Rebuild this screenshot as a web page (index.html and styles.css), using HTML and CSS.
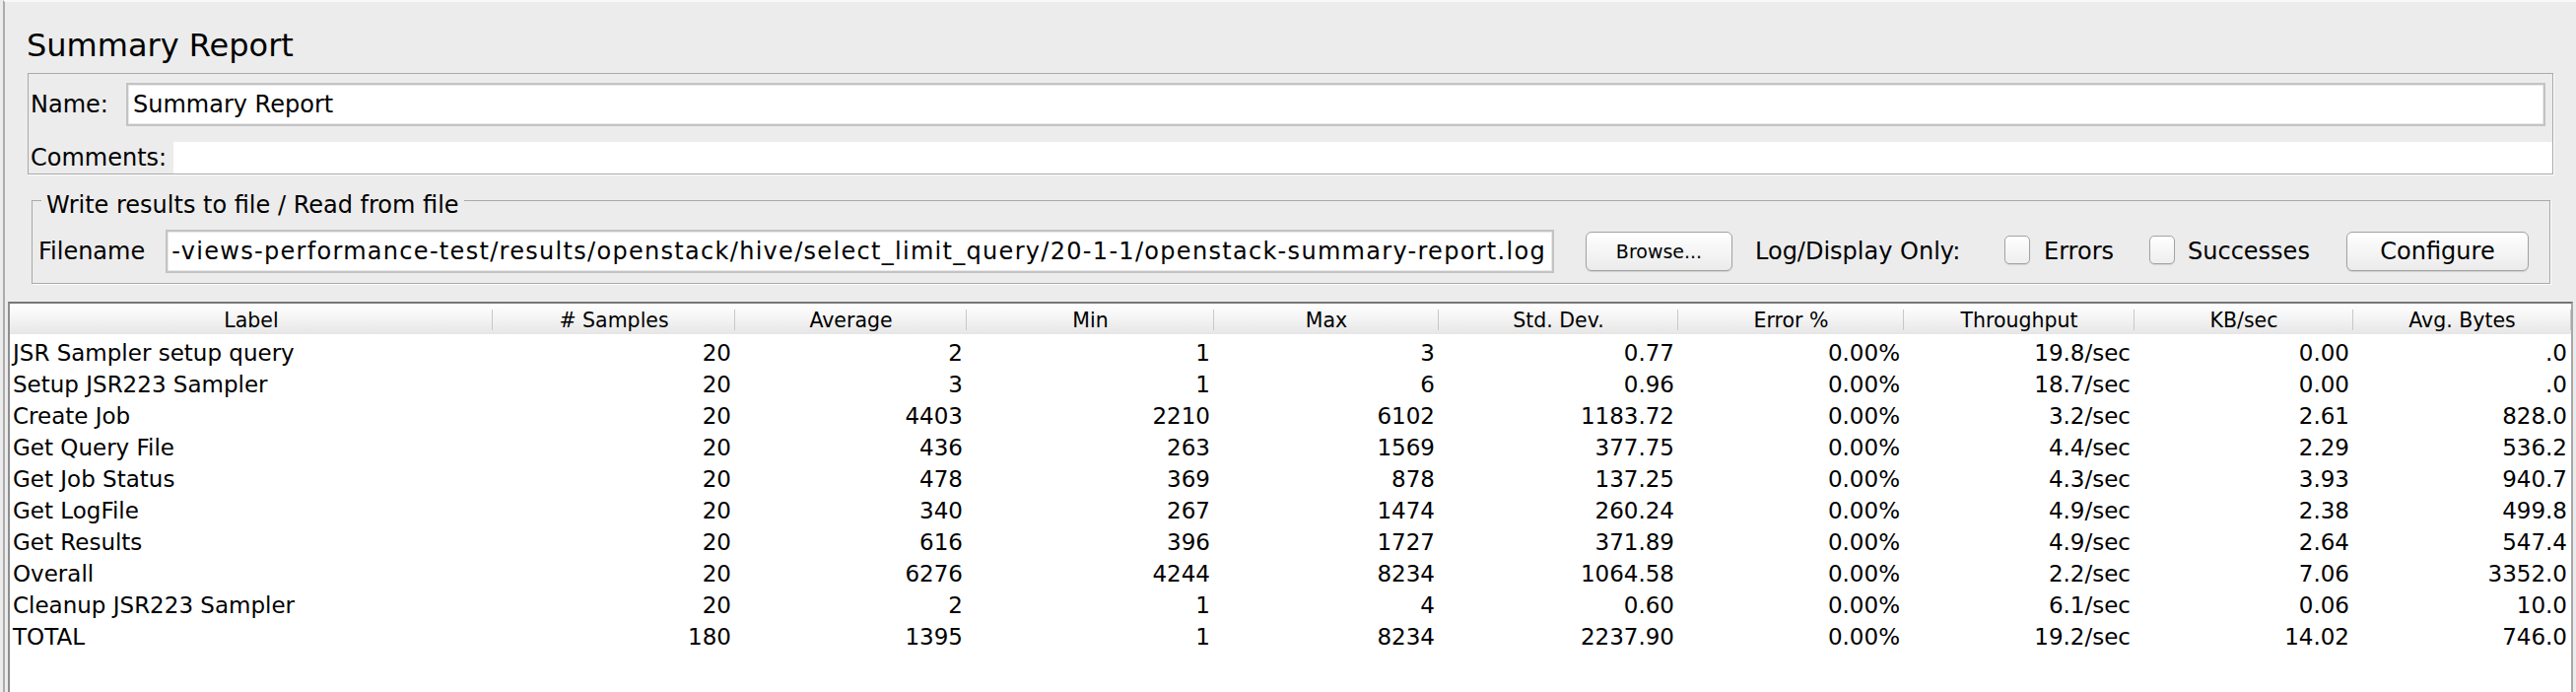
FILE: index.html
```html
<!DOCTYPE html>
<html lang="en">
<head>
<meta charset="utf-8">
<title>Summary Report</title>
<link rel="stylesheet" href="styles.css">
</head>
<body>
<div class="window">
  <h1 class="title">Summary Report</h1>

  <div class="name-panel">
    <div class="name-row">
      <span class="lbl name-lbl">Name:</span>
      <div class="textfield name-field">Summary Report</div>
    </div>
    <div class="comments-row">
      <span class="lbl comments-lbl">Comments:</span>
      <div class="comments-area"></div>
    </div>
  </div>

  <fieldset class="file-group">
    <legend class="group-title">Write results to file / Read from file</legend>
    <div class="file-row">
      <span class="lbl filename-lbl">Filename</span>
      <div class="textfield file-field"><span class="path">-views-performance-test/results/openstack/hive/select_limit_query/20-1-1/openstack-summary-report.log</span></div>
      <button class="btn btn-browse" type="button">Browse...</button>
      <span class="lbl log-lbl">Log/Display Only:</span>
      <span class="check"></span>
      <span class="lbl errors-lbl">Errors</span>
      <span class="check"></span>
      <span class="lbl succ-lbl">Successes</span>
      <button class="btn btn-configure" type="button">Configure</button>
    </div>
  </fieldset>

  <div class="table-frame">
    <table class="report">
      <colgroup>
        <col class="c-label"><col class="c-samples"><col class="c-avg"><col class="c-min"><col class="c-max">
        <col class="c-std"><col class="c-err"><col class="c-thr"><col class="c-kb"><col class="c-bytes">
      </colgroup>
      <thead>
        <tr class="head">
          <th>Label</th><th># Samples</th><th>Average</th><th>Min</th><th>Max</th>
          <th>Std. Dev.</th><th>Error %</th><th>Throughput</th><th>KB/sec</th><th>Avg. Bytes</th>
        </tr>
      </thead>
      <tbody>
        <tr><td class="label">JSR Sampler setup query</td><td>20</td><td>2</td><td>1</td><td>3</td><td>0.77</td><td>0.00%</td><td>19.8/sec</td><td>0.00</td><td>.0</td></tr>
        <tr><td class="label">Setup JSR223 Sampler</td><td>20</td><td>3</td><td>1</td><td>6</td><td>0.96</td><td>0.00%</td><td>18.7/sec</td><td>0.00</td><td>.0</td></tr>
        <tr><td class="label">Create Job</td><td>20</td><td>4403</td><td>2210</td><td>6102</td><td>1183.72</td><td>0.00%</td><td>3.2/sec</td><td>2.61</td><td>828.0</td></tr>
        <tr><td class="label">Get Query File</td><td>20</td><td>436</td><td>263</td><td>1569</td><td>377.75</td><td>0.00%</td><td>4.4/sec</td><td>2.29</td><td>536.2</td></tr>
        <tr><td class="label">Get Job Status</td><td>20</td><td>478</td><td>369</td><td>878</td><td>137.25</td><td>0.00%</td><td>4.3/sec</td><td>3.93</td><td>940.7</td></tr>
        <tr><td class="label">Get LogFile</td><td>20</td><td>340</td><td>267</td><td>1474</td><td>260.24</td><td>0.00%</td><td>4.9/sec</td><td>2.38</td><td>499.8</td></tr>
        <tr><td class="label">Get Results</td><td>20</td><td>616</td><td>396</td><td>1727</td><td>371.89</td><td>0.00%</td><td>4.9/sec</td><td>2.64</td><td>547.4</td></tr>
        <tr><td class="label">Overall</td><td>20</td><td>6276</td><td>4244</td><td>8234</td><td>1064.58</td><td>0.00%</td><td>2.2/sec</td><td>7.06</td><td>3352.0</td></tr>
        <tr><td class="label">Cleanup JSR223 Sampler</td><td>20</td><td>2</td><td>1</td><td>4</td><td>0.60</td><td>0.00%</td><td>6.1/sec</td><td>0.06</td><td>10.0</td></tr>
        <tr><td class="label">TOTAL</td><td>180</td><td>1395</td><td>1</td><td>8234</td><td>2237.90</td><td>0.00%</td><td>19.2/sec</td><td>14.02</td><td>746.0</td></tr>
      </tbody>
    </table>
  </div>
</div>
</body>
</html>
```

FILE: styles.css
```css
* {
  box-sizing: border-box;
}

html,
body {
  margin: 0;
  padding: 0;
}

body {
  width: 2614px;
  height: 702px;
  overflow: hidden;
  background: #ececec;
  color: #000;
  font-family: "DejaVu Sans", "Liberation Sans", sans-serif;
}

.window {
  height: 702px;
  margin-left: 3px;
  border-left: 2px solid #acacac;
  border-top: 2px solid #f8f8f8;
  display: flex;
  flex-direction: column;
}

.title {
  margin: 24px 0 0 22px;
  font-size: 32px;
  font-weight: normal;
  line-height: 40px;
}

.lbl {
  font-size: 24px;
  line-height: 28px;
  white-space: nowrap;
  flex: none;
}

/* Name / comments panel */
.name-panel {
  margin: 8px 23px 0 23px;
  padding: 9px 0 0 2px;
  border: 1px solid #a9a9a9;
  box-shadow: 1px 1px 0 #ffffff;
}

.name-row {
  display: flex;
  align-items: center;
  height: 44px;
}

.name-lbl {
  width: 97px;
}

.textfield {
  height: 44px;
  background: #fff;
  border: 2px solid #c3c3c3;
  box-shadow: inset 0 0 0 1px #e8e8e8;
  font-size: 24px;
  line-height: 40px;
  white-space: nowrap;
  overflow: hidden;
}

.name-field {
  flex: 1;
  margin-right: 7px;
  padding-left: 5px;
}

.comments-row {
  display: flex;
  align-items: center;
  height: 32px;
  margin-top: 16px;
}

.comments-lbl {
  width: 145px;
}

.comments-area {
  flex: 1;
  height: 32px;
  background: #fff;
}

/* Write results group */
.file-group {
  margin: 8px 26px 0 27px;
  padding: 11px 0 10px 6px;
  border: 1px solid #a9a9a9;
  box-shadow: 1px 1px 0 #ffffff;
  min-width: 0;
}

.group-title {
  margin-left: 3px;
  padding: 9px 5px 0;
  font-size: 24px;
  line-height: 28px;
}

.file-row {
  display: flex;
  align-items: center;
  height: 44px;
}

.filename-lbl {
  width: 129px;
}

.file-field {
  width: 1409px;
  flex: none;
  display: flex;
  justify-content: flex-end;
  padding-right: 6px;
}

.path {
  flex: none;
  letter-spacing: 1.3px;
}

.btn {
  flex: none;
  height: 40px;
  padding: 0;
  border: 1px solid #a2a2a2;
  border-radius: 6px;
  background: linear-gradient(#ffffff, #f3f3f3 60%, #ebebeb);
  box-shadow: 0 1px 1px rgba(0, 0, 0, 0.12);
  color: #000;
  font-family: "DejaVu Sans", "Liberation Sans", sans-serif;
}

.btn-browse {
  width: 149px;
  margin-left: 32px;
  font-size: 19px;
}

.log-lbl {
  width: 253px;
  margin-left: 23px;
}

.check {
  flex: none;
  width: 26px;
  height: 29px;
  margin-bottom: 4px;
  border: 1px solid #a3a3a3;
  border-radius: 5px;
  background: linear-gradient(#ffffff, #eeeeee);
  box-shadow: 0 1px 1px rgba(0, 0, 0, 0.1);
}

.errors-lbl {
  width: 107px;
  margin-left: 14px;
}

.succ-lbl {
  width: 161px;
  margin-left: 13px;
}

.btn-configure {
  width: 185px;
  font-size: 24px;
}

/* Table */
.table-frame {
  flex: 1;
  margin: 18px 3px 0 3px;
  border-top: 2px solid #767676;
  border-left: 2px solid #8e8e8e;
  border-right: 2px solid #a8a8a8;
  background: #fff;
}

.report {
  width: 2599px;
  table-layout: fixed;
  border-collapse: collapse;
  border-spacing: 0;
}

.c-label { width: 490px; }
.c-samples { width: 246px; }
.c-avg { width: 235px; }
.c-min { width: 251px; }
.c-max { width: 228px; }
.c-std { width: 243px; }
.c-err { width: 229px; }
.c-thr { width: 234px; }
.c-kb { width: 222px; }
.c-bytes { width: 221px; }

.head {
  height: 31px;
}

.report th {
  padding: 3px 0 0;
  font-size: 20.5px;
  line-height: 28px;
  font-weight: normal;
  text-align: center;
  white-space: nowrap;
  background:
    linear-gradient(#c8c8c8, #c8c8c8) right 6px / 1px 21px no-repeat,
    linear-gradient(#ffffff, #f5f5f5 45%, #e6e6e6);
}

.report tbody tr {
  height: 32px;
}

.report td {
  padding: 7px 4px 0 3px;
  font-size: 23px;
  line-height: 25px;
  text-align: right;
  white-space: nowrap;
  overflow: hidden;
}

.report td.label {
  text-align: left;
}
```
